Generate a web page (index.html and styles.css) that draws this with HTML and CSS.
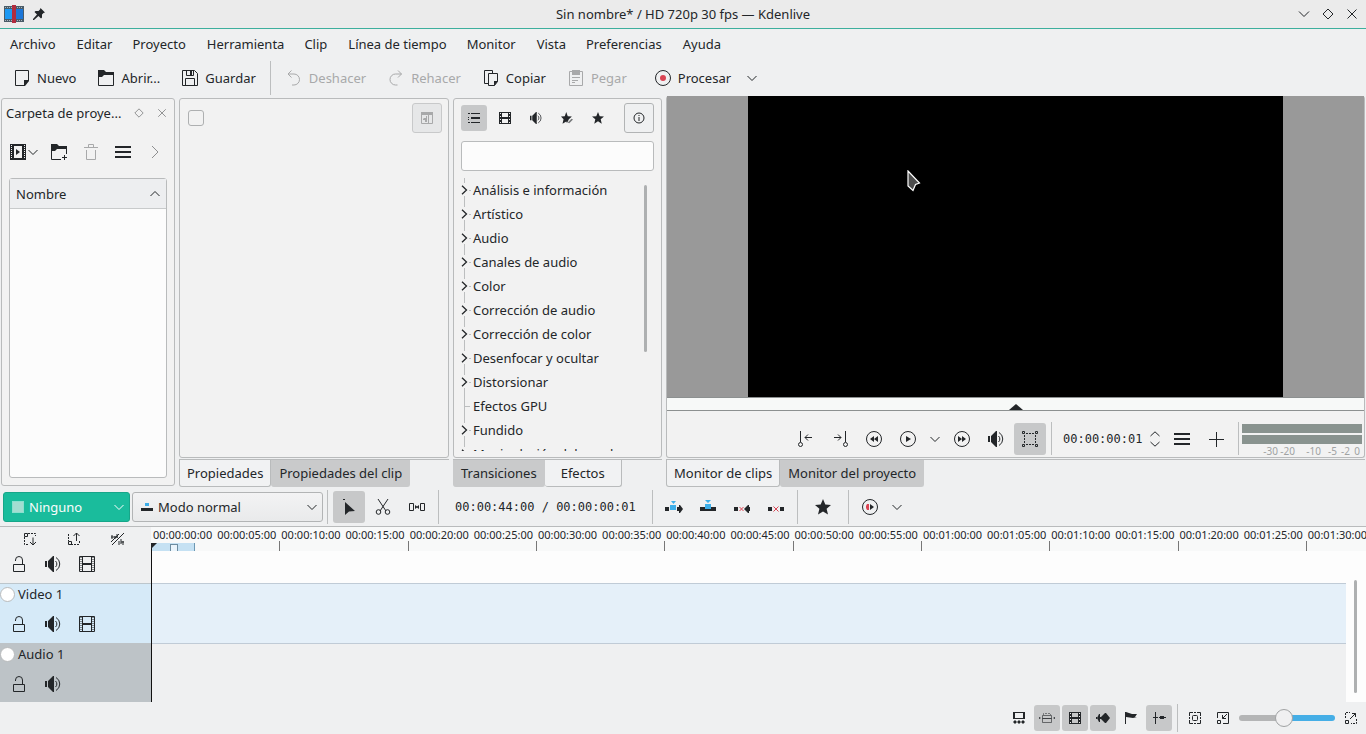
FILE: index.html
```html
<!doctype html>
<html lang="es">
<head>
	<meta charset="UTF-8">
	<title>Sin nombre* / HD 720p 30 fps — Kdenlive</title>
	<link rel="stylesheet" href="styles.css">
</head>
<body>
<svg class="defs" aria-hidden="true">
	<symbol id="down" viewBox="0 0 10 10"><path d="M.5 3 5 7.500 9.500 3" class="l"/></symbol>
	<symbol id="up" viewBox="0 0 10 10"><path d="M.5 7 5 2.500 9.500 7" class="l"/></symbol>
	<symbol id="right" viewBox="0 0 10 14"><path d="M2 1l6 6-6 6" class="l"/></symbol>
	<symbol id="branch" viewBox="0 0 7 10"><path d="M1 .8L5.500 5 1 9.200" class="l bold"/></symbol>
	<symbol id="diamond" viewBox="0 0 12 12"><path d="M6 1l5 5-5 5-5-5z" class="l"/></symbol>
	<symbol id="close" viewBox="0 0 12 12"><path d="M1.500 1.500l9 9m0-9l-9 9" class="l"/></symbol>
	<symbol id="new" viewBox="0 0 16 16"><path d="M1.500.5h13v10l-4.500 5h-8.500z" class="l"/><path d="M10 10h5v1l-4 5h-1z"/></symbol>
	<symbol id="open" viewBox="0 0 16 16"><path d="M0 0h6l2 2h8v3H6L4 7H0z"/><path d="M.5 4v11.500h15V4" class="l"/></symbol>
	<symbol id="save" viewBox="0 0 16 16"><path d="M.5.5h12l3 3v12H.5zM3.500 15.500v-7h9v7M4.500.5v5h7v-5" class="l"/><path d="M8 1h2v4H8z"/></symbol>
	<symbol id="undo" viewBox="0 0 16 16"><path d="M5.500.5L2 4l3.500 3.500M2 4h6a5.500 5.500 0 010 11H6" class="l"/></symbol>
	<symbol id="redo" viewBox="0 0 16 16"><path d="M10 .5L13.500 4 10 7.500M13.500 4h-6a5.500 5.500 0 000 11h2" class="l"/></symbol>
	<symbol id="copy" viewBox="0 0 16 16"><path d="M5.500 13.500h-4V.5h8v3M5.500 3.500h9v8l-3 4h-6z" class="l"/><path d="M11 11h4l-4 5z"/></symbol>
	<symbol id="paste" viewBox="0 0 16 16"><path d="M1.500 1.500h13v14h-13zM4 7.500h8M4 10.500h6M4 12.500h3" class="l"/><path d="M4 0h8v5H4z"/></symbol>
	<symbol id="render" viewBox="0 0 16 16"><circle cx="8" cy="8" r="7.500" class="l"/><circle cx="8" cy="8" r="3" fill="#da4453"/></symbol>
	<symbol id="addclip" viewBox="0 0 16 16"><path d="M0 0h16v16H0zM4 2v12h8V2z" fill-rule="evenodd"/><path d="M1.500 1v14M14.500 1v14" class="holes"/><path d="M6 5l4 3-4 3z"/></symbol>
	<symbol id="addfolder" viewBox="0 0 16 16"><path d="M0 0h6l2 2h8v3H6L4 7H0z"/><path d="M.5 4v11.500H10M15.500 4v6M13.500 11v5M11 13.500h5" class="l"/></symbol>
	<symbol id="trash" viewBox="0 0 16 16"><path d="M1 3.500h14M5.500 3V.5h5V3M3.500 6v9.500h9V6" class="l"/></symbol>
	<symbol id="menu" viewBox="0 0 16 16"><path d="M0 2h16v2H0zM0 7h16v2H0zM0 12h16v2H0z"/></symbol>
	<symbol id="pane" viewBox="0 0 16 16"><path d="M2.500 2.500h11v11h-11zM9.500 5v8" class="l"/><path d="M2 2h12v3H2zM7 6h1v6H6v-2H4V9l1-1h2z"/></symbol>
	<symbol id="list" viewBox="0 0 16 16"><path d="M5 3h9v1H5zM5 7h9v2H5zM5 12h9v1H5zM2 3h2v1H2zM2 7h1v1H2zM2 9h1v1H2zM2 12h2v1H2z"/></symbol>
	<symbol id="film" viewBox="0 0 12 12"><path d="M0 0h12v12H0zM3 1v4h6V1zM3 7v4h6V7z" fill-rule="evenodd"/><path d="M1.500 1v10M10.500 1v10" class="holes wide-dash"/></symbol>
	<symbol id="sound" viewBox="0 0 16 16"><path d="M0 5h2v6H0zM3 5l5-5h1v16H8l-5-5z"/><path d="M10.500 5a4 4 0 010 6M11 1.500a7.500 7.500 0 010 13" class="l"/></symbol>
	<symbol id="star" viewBox="0 0 16 16"><path d="M8 0l2.300 5.500L16 6l-4.400 3.700L13 15.500 8 12.400 3 15.500l1.400-5.800L0 6l5.700-.5z"/></symbol>
	<symbol id="staredit" viewBox="0 0 16 16"><path d="M7 0l2 5.500 5.500.5-4 3.700-2.500 5-1-2-5 2.800 1.400-5.800L0 6l5-.5z"/><path d="M9 14l5-5 2 1-5 5z" opacity=".6"/></symbol>
	<symbol id="info" viewBox="0 0 14 14"><circle cx="7" cy="7" r="5" class="l"/><path d="M6.500 4h1v1h-1zM6.500 6h1v4h-1z"/></symbol>
	<symbol id="zonein" viewBox="0 0 16 16"><path d="M2.500 0v11M14 6.500H7M10 3.500l-3 3 3 3" class="l"/><circle cx="2.500" cy="13.500" r="2" class="l"/></symbol>
	<symbol id="zoneout" viewBox="0 0 16 16"><path d="M13.500 0v11M2 6.500h7M6 3.500l3 3-3 3" class="l"/><circle cx="13.500" cy="13.500" r="2" class="l"/></symbol>
	<symbol id="rewind" viewBox="0 0 16 16"><circle cx="8" cy="8" r="7.500" class="l"/><path d="M8 5v6L4 8zM12 5v6L8 8z"/></symbol>
	<symbol id="play" viewBox="0 0 16 16"><circle cx="8" cy="8" r="7.500" class="l"/><path d="M6 5l5 3-5 3z"/></symbol>
	<symbol id="forward" viewBox="0 0 16 16"><circle cx="8" cy="8" r="7.500" class="l"/><path d="M4 5l4 3-4 3zM8 5l4 3-4 3z"/></symbol>
	<symbol id="frame" viewBox="0 0 16 16"><path d="M.5.5h2v2h-2zM13.500.5h2v2h-2zM.5 13.500h2v2h-2zM13.500 13.500h2v2h-2z" class="l"/><path d="M4 2.500h9M4 13.500h9M2.500 4v9M13.500 4v9" class="dash"/></symbol>
	<symbol id="plus" viewBox="0 0 16 16"><path d="M8.500 1v15M1 8.500h15" class="l"/></symbol>
	<symbol id="spin" viewBox="0 0 10 16"><path d="M.5 5L5 .8 9.500 5M.5 11L5 15.200 9.500 11" class="l"/></symbol>
	<symbol id="normal" viewBox="0 0 12 10"><path d="M4 1h4v3H4z" fill="#3daee9"/><path d="M0 6h12v3H0z"/></symbol>
	<symbol id="arrow" viewBox="0 0 16 16"><path d="M4 3l10 9-6 .5L4 16zM2 0h2v1H2z"/></symbol>
	<symbol id="cut" viewBox="0 0 16 16"><path d="M3 0l8 12M13 0L5 12" class="l"/><circle cx="3.500" cy="13" r="2.300" class="l"/><circle cx="12.500" cy="13" r="2.300" class="l"/></symbol>
	<symbol id="spacer" viewBox="0 0 16 16"><path d="M.5 4.500h4v7h-4zM11.500 4.500h4v7h-4z" class="l"/><path d="M6 6l2 1.500L10 6v4L8 8.500 6 10z"/></symbol>
	<symbol id="insert" viewBox="0 0 18 16"><path d="M0 8h4v4H0zM12 8h2V6h1l3 4-3 4h-1v-2h-2z"/><path d="M5 6h6v5H5zM6 2h5L8.500 5z" fill="#3daee9"/></symbol>
	<symbol id="overwrite" viewBox="0 0 16 16"><path d="M0 8h16v4H0z"/><path d="M5 5h6v5H5zM5 1h6L8 4z" fill="#3daee9"/></symbol>
	<symbol id="extract" viewBox="0 0 16 16"><path d="M0 8h4v4H0zM10 10l4-4h1v2h1v4h-1v2h-1z"/><path d="M5.500 8l4 4m0-4l-4 4" class="l red"/></symbol>
	<symbol id="lift" viewBox="0 0 16 16"><path d="M0 8h4v4H0zM12 8h4v4h-4z"/><path d="M5.500 7.500l5 5m0-5l-5 5" class="l red"/></symbol>
	<symbol id="preview" viewBox="0 0 16 16"><circle cx="8" cy="8" r="7.500" class="l"/><path d="M7 5v6H5L4 9V7l1-2z" fill="#da4453"/><path d="M8 5l4 3-4 3z"/></symbol>
	<symbol id="lock" viewBox="0 0 16 16"><path d="M2.500 8.500h11v7h-11zM11.500 8V4a3.500 3.500 0 00-7 0v1" class="l"/></symbol>
	<symbol id="filmtrack" viewBox="0 0 16 16"><path d="M.5.5h15v15H.5zM3.500 0v16M12.500 0v16M4 7.500h8M4 8.500h8" class="l"/><path d="M2 1v14M14 1v14" class="dots"/></symbol>
	<symbol id="down-tracks" viewBox="0 0 14 14"><path d="M5 1.500h7.500V4M1.500 5v7.500H6" class="dash"/><path d="M1.500 1.500h3v3h-3zM10 5.500V13M7 10l3 3 3-3" class="l"/></symbol>
	<symbol id="up-tracks" viewBox="0 0 14 14"><path d="M1.500 2v7M4 12.500h9M12.500 9v3" class="dash"/><path d="M1.500 9.500h3v3h-3zM9.500 9V1M6.500 4l3-3 3 3" class="l"/></symbol>
	<symbol id="nosplit" viewBox="0 0 14 14"><path d="M1 13L13 1M0 10l8-8M1 3v4M4 4v3M6 2v4M8 9v4M10 7v5M12 9v4M10 10h3M0 5h7" class="l"/></symbol>
	<symbol id="thumbs" viewBox="0 0 14 14"><path d="M1 1h12v7H1zM3 2v5h8V2z" fill-rule="evenodd"/><path d="M1 11l2-2 2 2-2 2zM5 11l2-2 2 2-2 2zM9 11l2-2 2 2-2 2z"/></symbol>
	<symbol id="fit" viewBox="0 0 16 16"><path d="M4.500 5V3.500h7V5" class="dash" opacity=".5"/><path d="M3.500 8.500h9v4h-9zM3.500 5.500h9v3h-9z" class="l" opacity=".6"/><path d="M0 7l2 1-2 1zM16 7l-2 1 2 1z"/></symbol>
	<symbol id="wave" viewBox="0 0 16 16"><path d="M1 7h1v2H1zM2 8l2-4h1v3h1l4-4h1l4 5-4 5h-1L6 9H5v3H4z"/></symbol>
	<symbol id="flag" viewBox="0 0 16 16"><path d="M2 2h1l6 2h5l-2 3h2l-4 1-7-1v7H2z"/></symbol>
	<symbol id="snap" viewBox="0 0 16 16"><path d="M4.500 2v12M2 7.500h5M8 7.500h1" class="l"/><path d="M9 6h4v1h2v1h-2v1H9z"/></symbol>
	<symbol id="zoomfit" viewBox="0 0 14 14"><path d="M1.500 5V1.500H5M9 1.500h3.500V5M12.500 9v3.500H9M5 12.500H1.500V9M6 1.500h2M6 12.500h2M1.500 6v2M12.500 6v2" class="l"/><rect x="4.500" y="4.500" width="5" height="5" rx="1" class="l"/></symbol>
	<symbol id="zoomout" viewBox="0 0 14 14"><path d="M1.500 7V1.500h11v11H7M1.500 9.500h3v3h-3zM11 3L6.500 7.500M6.500 4v3.500H10" class="l"/></symbol>
	<symbol id="zoomin" viewBox="0 0 14 14"><path d="M1.500 7V1.500H6M12.500 8v4.500H7" class="dash"/><path d="M1.500 9.500h3v3h-3zM6 8l5.500-5.500M8 2.500h3.500V6" class="l"/></symbol>
</svg>

<header class="titlebar">
	<div class="title-left">
		<svg class="logo" viewBox="0 0 20 18"><path d="M0 1h20v16H0z" fill="#4a5c68"/><path d="M1 4h8v10H1z" fill="#1d99f3"/><path d="M11 4h8v10h-8z" fill="#1b76d8"/><path d="M1 2.500h18M1 15.500h18" stroke="#aab7bf" stroke-dasharray="1 1"/><path d="M8 0h4v18H8z" fill="#b02c3f"/></svg>
		<svg class="pin" viewBox="0 0 12 12"><path d="M7.500 0L12 4.500 10.500 5 9 6.500v3L8 10.500 5.500 8 1 12H0v-1l4-4.500L1.500 4l1-1h3L7 1.500z"/></svg>
	</div>
	<h1>Sin nombre* / HD 720p 30 fps — Kdenlive</h1>
	<div class="title-right">
		<button aria-label="Minimizar"><svg class="s12" viewBox="0 0 12 12"><path d="M1 3.500l5 5 5-5" class="l"/></svg></button>
		<button aria-label="Maximizar"><svg class="s12"><use href="#diamond"/></svg></button>
		<button aria-label="Cerrar"><svg class="s12"><use href="#close"/></svg></button>
	</div>
</header>

<nav class="menubar">
	<button>Archivo</button>
	<button>Editar</button>
	<button>Proyecto</button>
	<button>Herramienta</button>
	<button>Clip</button>
	<button>Línea de tiempo</button>
	<button>Monitor</button>
	<button>Vista</button>
	<button>Preferencias</button>
	<button>Ayuda</button>
</nav>

<div class="toolbar">
	<button><svg class="s16"><use href="#new"/></svg>Nuevo</button>
	<button><svg class="s16"><use href="#open"/></svg>Abrir...</button>
	<button><svg class="s16"><use href="#save"/></svg>Guardar</button>
	<span class="sep"></span>
	<button disabled><svg class="s16"><use href="#undo"/></svg>Deshacer</button>
	<button disabled><svg class="s16"><use href="#redo"/></svg>Rehacer</button>
	<button><svg class="s16"><use href="#copy"/></svg>Copiar</button>
	<button disabled><svg class="s16"><use href="#paste"/></svg>Pegar</button>
	<button class="process"><svg class="s16"><use href="#render"/></svg>Procesar</button>
	<button class="drop" aria-label="Opciones de procesado"><svg class="s10"><use href="#down"/></svg></button>
</div>

<main class="docks">
	<section class="panel bin">
		<div class="dock-title">
			<h2>Carpeta de proye...</h2>
			<button aria-label="Desacoplar"><svg class="s10"><use href="#diamond"/></svg></button>
			<button aria-label="Cerrar panel"><svg class="s10"><use href="#close"/></svg></button>
		</div>
		<div class="bin-tools">
			<button class="wide" aria-label="Añadir clip"><svg class="s16"><use href="#addclip"/></svg><svg class="s10"><use href="#down"/></svg></button>
			<button aria-label="Crear carpeta"><svg class="s16"><use href="#addfolder"/></svg></button>
			<button aria-label="Borrar" disabled><svg class="s16"><use href="#trash"/></svg></button>
			<button aria-label="Opciones"><svg class="s16"><use href="#menu"/></svg></button>
			<button aria-label="Más" class="more"><svg class="more-icon"><use href="#right"/></svg></button>
		</div>
		<div class="bin-tree">
			<button class="bin-head">Nombre<svg class="s10"><use href="#up"/></svg></button>
		</div>
	</section>

	<section class="dock">
		<div class="panel props">
			<input type="checkbox" aria-label="Activar efectos">
			<button class="framed" aria-label="Mostrar panel" disabled><svg class="s16"><use href="#pane"/></svg></button>
		</div>
		<div class="tabs">
			<button>Propiedades</button>
			<button class="dark">Propiedades del clip</button>
		</div>
	</section>

	<section class="dock">
		<div class="panel effects">
			<div class="effect-tools">
				<button class="on" aria-label="Todos"><svg class="s16"><use href="#list"/></svg></button>
				<button aria-label="Vídeo"><svg class="s12"><use href="#film"/></svg></button>
				<button aria-label="Audio"><svg class="s12"><use href="#sound"/></svg></button>
				<button aria-label="Personalizados"><svg class="s12"><use href="#staredit"/></svg></button>
				<button aria-label="Favoritos"><svg class="s12"><use href="#star"/></svg></button>
				<button class="framed" aria-label="Información"><svg class="s14"><use href="#info"/></svg></button>
			</div>
			<input type="text" class="search" aria-label="Buscar">
			<div class="tree-wrap">
				<ul class="tree">
					<li><svg><use href="#branch"/></svg>Análisis e información</li>
					<li><svg><use href="#branch"/></svg>Artístico</li>
					<li><svg><use href="#branch"/></svg>Audio</li>
					<li><svg><use href="#branch"/></svg>Canales de audio</li>
					<li><svg><use href="#branch"/></svg>Color</li>
					<li><svg><use href="#branch"/></svg>Corrección de audio</li>
					<li><svg><use href="#branch"/></svg>Corrección de color</li>
					<li><svg><use href="#branch"/></svg>Desenfocar y ocultar</li>
					<li><svg><use href="#branch"/></svg>Distorsionar</li>
					<li class="leaf">Efectos GPU</li>
					<li><svg><use href="#branch"/></svg>Fundido</li>
					<li><svg><use href="#branch"/></svg>Manipulación del canal</li>
				</ul>
				<span class="thumb"></span>
			</div>
		</div>
		<div class="tabs">
			<button class="dark">Transiciones</button>
			<button class="roomy">Efectos</button>
		</div>
	</section>

	<section class="dock">
		<div class="panel monitor">
			<div class="stage">
				<div class="screen"></div>
				<svg class="cursor" viewBox="0 0 14 22"><path d="M1 1l11.500 12-4 1.500L6 20.500 1 16z" fill="#4d4d4d" stroke="#fff" stroke-width="1.200"/></svg>
			</div>
			<div class="seek"><span class="marker"></span></div>
			<div class="controls">
				<button aria-label="Inicio de zona"><svg class="s16"><use href="#zonein"/></svg></button>
				<button aria-label="Fin de zona"><svg class="s16"><use href="#zoneout"/></svg></button>
				<button aria-label="Rebobinar"><svg class="s16"><use href="#rewind"/></svg></button>
				<button aria-label="Reproducir"><svg class="s16"><use href="#play"/></svg></button>
				<button class="drop" aria-label="Opciones de reproducción"><svg class="s10"><use href="#down"/></svg></button>
				<button aria-label="Avanzar"><svg class="s16"><use href="#forward"/></svg></button>
				<button aria-label="Volumen"><svg class="s16"><use href="#sound"/></svg></button>
				<button class="on" aria-label="Modo edición"><svg class="s16"><use href="#frame"/></svg></button>
				<span class="sep"></span>
				<input type="text" class="timecode" value="00:00:00:01" aria-label="Posición">
				<button class="spin" aria-label="Cambiar posición"><svg><use href="#spin"/></svg></button>
				<button aria-label="Menú"><svg class="s16"><use href="#menu"/></svg></button>
				<button aria-label="Añadir"><svg class="s16"><use href="#plus"/></svg></button>
				<span class="sep last"></span>
				<div class="meter">
					<i></i>
					<i></i>
					<div class="scale"><span>-30</span><span>-20</span><span>-10</span><span>-5</span><span>-2</span><span>0</span></div>
				</div>
			</div>
		</div>
		<div class="tabs">
			<button>Monitor de clips</button>
			<button class="dark">Monitor del proyecto</button>
		</div>
	</section>
</main>

<div class="edit-bar">
	<div class="combo green">
		<span class="swatch"></span>
		<select aria-label="Transición automática"><option>Ninguno</option></select>
		<svg class="s10"><use href="#down"/></svg>
	</div>
	<div class="combo mode">
		<svg class="mode-icon"><use href="#normal"/></svg>
		<select aria-label="Modo de edición"><option>Modo normal</option></select>
		<svg class="s10"><use href="#down"/></svg>
	</div>
	<span class="sep"></span>
	<button class="on" aria-label="Selección"><svg class="s16"><use href="#arrow"/></svg></button>
	<button aria-label="Cuchilla"><svg class="s16"><use href="#cut"/></svg></button>
	<button aria-label="Espaciador"><svg class="s16"><use href="#spacer"/></svg></button>
	<span class="sep"></span>
	<span class="position">00:00:44:00 / 00:00:00:01</span>
	<span class="sep"></span>
	<button aria-label="Insertar"><svg class="s18"><use href="#insert"/></svg></button>
	<button aria-label="Sobrescribir"><svg class="s16"><use href="#overwrite"/></svg></button>
	<button aria-label="Extraer"><svg class="s16"><use href="#extract"/></svg></button>
	<button aria-label="Levantar"><svg class="s16"><use href="#lift"/></svg></button>
	<span class="sep"></span>
	<button class="fav" aria-label="Favoritos"><svg class="s16"><use href="#star"/></svg></button>
	<span class="sep"></span>
	<button aria-label="Previsualizar"><svg class="s16"><use href="#preview"/></svg></button>
	<button class="drop" aria-label="Opciones de previsualización"><svg class="s10"><use href="#down"/></svg></button>
</div>

<section class="timeline">
	<div class="heads">
		<div class="head-tools">
			<button aria-label="Bajar pistas"><svg class="s14"><use href="#down-tracks"/></svg></button>
			<button aria-label="Subir pistas"><svg class="s14"><use href="#up-tracks"/></svg></button>
			<button aria-label="Separar audio"><svg class="s14"><use href="#nosplit"/></svg></button>
		</div>
		<div class="head first">
			<div class="head-icons">
				<button aria-label="Bloquear"><svg class="s16"><use href="#lock"/></svg></button>
				<button aria-label="Silenciar"><svg class="s16"><use href="#sound"/></svg></button>
				<button aria-label="Ocultar"><svg class="s16"><use href="#filmtrack"/></svg></button>
			</div>
		</div>
		<div class="head video">
			<label><input type="radio" name="target">Video 1</label>
			<div class="head-icons">
				<button aria-label="Bloquear"><svg class="s16"><use href="#lock"/></svg></button>
				<button aria-label="Silenciar"><svg class="s16"><use href="#sound"/></svg></button>
				<button aria-label="Ocultar"><svg class="s16"><use href="#filmtrack"/></svg></button>
			</div>
		</div>
		<div class="head audio">
			<label><input type="radio" name="target">Audio 1</label>
			<div class="head-icons">
				<button aria-label="Bloquear"><svg class="s16"><use href="#lock"/></svg></button>
				<button aria-label="Silenciar"><svg class="s16"><use href="#sound"/></svg></button>
			</div>
		</div>
	</div>
	<div class="area">
		<div class="ruler">
			<ol>
				<li>00:00:00:00</li>
				<li>00:00:05:00</li>
				<li>00:00:10:00</li>
				<li>00:00:15:00</li>
				<li>00:00:20:00</li>
				<li>00:00:25:00</li>
				<li>00:00:30:00</li>
				<li>00:00:35:00</li>
				<li>00:00:40:00</li>
				<li>00:00:45:00</li>
				<li>00:00:50:00</li>
				<li>00:00:55:00</li>
				<li>00:01:00:00</li>
				<li>00:01:05:00</li>
				<li>00:01:10:00</li>
				<li>00:01:15:00</li>
				<li>00:01:20:00</li>
				<li>00:01:25:00</li>
				<li>00:01:30:00</li>
			</ol>
			<span class="zone"></span>
		</div>
		<div class="tracks">
			<div class="lanes">
				<div class="lane first"></div>
				<div class="lane video"></div>
				<div class="lane audio"></div>
			</div>
			<div class="vscroll"><span></span></div>
		</div>
		<div class="playhead"></div>
	</div>
</section>

<footer class="status">
	<button aria-label="Miniaturas"><svg class="s14"><use href="#thumbs"/></svg></button>
	<button class="on" aria-label="Ajustar"><svg class="s16"><use href="#fit"/></svg></button>
	<button class="on" aria-label="Miniaturas de vídeo"><svg class="s12"><use href="#film"/></svg></button>
	<button class="on" aria-label="Miniaturas de audio"><svg class="s16"><use href="#wave"/></svg></button>
	<button aria-label="Marcadores"><svg class="s16"><use href="#flag"/></svg></button>
	<button class="on" aria-label="Ajustar a la rejilla"><svg class="s16"><use href="#snap"/></svg></button>
	<span class="sep"></span>
	<button aria-label="Ajustar al proyecto"><svg class="s14"><use href="#zoomfit"/></svg></button>
	<button aria-label="Reducir"><svg class="s14"><use href="#zoomout"/></svg></button>
	<input type="range" min="0" max="100" value="46" aria-label="Ampliación">
	<button aria-label="Ampliar"><svg class="s14"><use href="#zoomin"/></svg></button>
</footer>
</body>
</html>
```
FILE: styles.css
```css
*{
	margin:0;
	padding:0;
	box-sizing:border-box;
}
body{
	display:flex;
	flex-direction:column;
	height:100vh;
	overflow:hidden;
	background:#eff0f1;
	color:#232629;
	font:13px/18px "Noto Sans",sans-serif;
}
button,input,select{
	font:inherit;
	color:inherit;
	border:0;
	background:none;
}
button{
	display:flex;
	align-items:center;
	justify-content:center;
	flex:none;
	white-space:nowrap;
}
ul,ol{
	list-style:none;
}
h1,h2{
	font-size:13px;
	font-weight:normal;
}

/* icons */
.defs{
	position:absolute;
	width:0;
	height:0;
}
svg{
	display:block;
	flex:none;
	fill:currentColor;
}
.l{
	fill:none;
	stroke:currentColor;
}
.bold{
	stroke-width:1.3;
}
.red{
	stroke:#da4453;
}
.dash{
	fill:none;
	stroke:currentColor;
	stroke-dasharray:2 1;
}
.holes{
	stroke:#f2f2f2;
	stroke-dasharray:1 1;
}
.wide-dash{
	stroke-dasharray:1 2;
}
.dots{
	stroke:currentColor;
	stroke-dasharray:1 1;
}
.s10{
	width:10px;
	height:10px;
}
.s12{
	width:12px;
	height:12px;
}
.s14{
	width:14px;
	height:14px;
}
.s16{
	width:16px;
	height:16px;
}
.s18{
	width:18px;
	height:16px;
}
.sep{
	flex:none;
	align-self:stretch;
	width:1px;
	background:#bcbebf;
}
.on{
	background:#c7c8c9;
	border-radius:3px;
}
button:disabled{
	color:#a8a9aa;
}

/* title bar */
.titlebar{
	display:grid;
	grid-template-columns:1fr auto 1fr;
	align-items:center;
	height:29px;
	border-bottom:1px solid #3daf9d;
	background:#ebebeb;
}
.title-left{
	display:flex;
	align-items:center;
	gap:9px;
	padding-left:4px;
}
.logo{
	width:20px;
	height:18px;
}
.pin{
	width:12px;
	height:12px;
}
.title-right{
	display:flex;
	justify-content:flex-end;
	gap:12px;
	padding-right:8px;
}

/* menu and main toolbar */
.menubar{
	display:flex;
	gap:20px;
	height:31px;
	padding:0 10px 2px;
}
.menubar button:nth-child(odd){
	margin-right:1px;
}
.toolbar{
	display:flex;
	height:36px;
	padding:0 3px;
}
.toolbar button{
	gap:7px;
	padding:0 11px;
}
.toolbar .sep{
	margin:1px 4px 1px 3px;
}
.toolbar .process{
	margin-left:6px;
}
.toolbar .drop{
	padding:0 5px;
}

/* docks */
.docks{
	flex:1;
	min-height:0;
	display:grid;
	grid-template-columns:174px 270px 209px 1fr;
	gap:4px;
	padding:0 1px;
}
.dock{
	display:flex;
	flex-direction:column;
	min-width:0;
	min-height:0;
	padding-top:2px;
}
.panel{
	border:1px solid #b9bbbc;
	border-radius:3px;
	background:#f2f2f2;
}
.dock .panel{
	flex:1;
	min-height:0;
}
.tabs{
	display:flex;
	height:28px;
	margin:1px 0 1px;
	border-top:1px solid #b9bbbc;
}
.tabs button{
	padding:0 7px;
	border:1px solid #b9bbbc;
	border-top:0;
	border-radius:0 0 3px 3px;
	background:#f1f2f3;
}
.tabs .dark{
	border-color:#c9cacb;
	background:#c9cacb;
}
.tabs .roomy{
	padding:0 16px;
	border-left:0;
}

.bin{
	display:flex;
	flex-direction:column;
	margin:2px 0;
}
.dock-title{
	display:flex;
	align-items:center;
	height:27px;
	padding:0 9px 0 4px;
	gap:13px;
}
.dock-title h2{
	flex:1;
	white-space:nowrap;
}
.dock-title button{
	color:#7f8182;
}
.bin-tools{
	display:flex;
	height:52px;
	padding-left:1px;
}
.bin-tools button{
	width:32px;
}
.bin-tools .wide{
	width:40px;
	padding-left:1px;
	gap:2px;
}
.bin-tools .more{
	color:#8e8f90;
}
.more-icon{
	width:10px;
	height:14px;
}
.bin-tree{
	flex:1;
	margin:0 7px;
	margin-bottom:7px;
	border:1px solid #b9bbbc;
	border-radius:3px;
	background:#fcfcfc;
}
.bin-head{
	width:100%;
	height:30px;
	padding:0 6px;
	justify-content:space-between;
	border-bottom:1px solid #c8cacb;
	background:#edeef0;
}

.props{
	display:flex;
	justify-content:space-between;
	align-items:flex-start;
	padding:4px 6px 0 8px;
}
.props input{
	appearance:none;
	width:16px;
	height:16px;
	margin-top:7px;
	border:1px solid #aeb0b1;
	border-radius:3px;
}
.framed{
	width:30px;
	height:30px;
	border:1px solid #b2b4b5;
	border-radius:3px;
	background:#eff0f1;
}
.framed:disabled{
	border-color:#c8c9ca;
	background:#e6e7e8;
}

.effects{
	display:flex;
	flex-direction:column;
	padding:4px 7px 6px;
}
.effect-tools{
	display:flex;
	align-items:center;
	gap:5px;
}
.effect-tools button{
	width:26px;
	height:26px;
}
.effect-tools .framed{
	width:30px;
	height:30px;
	margin-left:auto;
}
.search{
	height:30px;
	margin:8px 0 7px;
	padding:0 6px;
	border:1px solid #b9bbbc;
	border-radius:3px;
	background:#fcfcfc;
}
.tree-wrap{
	flex:1;
	min-height:0;
	display:flex;
	justify-content:space-between;
	overflow:hidden;
}
.tree li{
	display:flex;
	align-items:center;
	height:24px;
	padding-left:12px;
	white-space:nowrap;
	background:linear-gradient(#bcbebf,#bcbebf) 3px 0/1px 5px no-repeat,linear-gradient(#bcbebf,#bcbebf) 3px 18px/1px 6px no-repeat,linear-gradient(#bcbebf,#bcbebf) 8px 12px/2px 1px no-repeat;
}
.tree .leaf{
	background:linear-gradient(#bcbebf,#bcbebf) 3px 0/1px 24px no-repeat,linear-gradient(#bcbebf,#bcbebf) 4px 12px/5px 1px no-repeat;
}
.tree svg{
	width:7px;
	height:10px;
	margin:0 5px 0 -12px;
}
.thumb{
	width:3px;
	height:167px;
	margin:7px 7px 0 0;
	border-radius:2px;
	background:#aeb0b1;
}

/* monitor */
.monitor{
	display:flex;
	flex-direction:column;
	margin-top:-2px;
	border-top:0;
}
.stage{
	position:relative;
	flex:1;
	min-height:0;
	display:flex;
	justify-content:center;
	background:#999;
}
.screen{
	height:100%;
	aspect-ratio:16/9;
	background:#000;
}
.cursor{
	position:absolute;
	left:240px;
	top:74px;
	width:14px;
	height:22px;
}
.seek{
	display:flex;
	justify-content:center;
	align-items:flex-end;
	height:14px;
	border-top:1px solid #8c9090;
	border-bottom:1px solid #8c9090;
	background:#f7f9f8;
}
.marker{
	border:7px solid transparent;
	border-top:0;
	border-bottom:6px solid #232629;
}
.controls{
	display:flex;
	justify-content:flex-end;
	align-items:center;
	height:46px;
	padding:9px 2px 0 0;
}
.controls button{
	width:34px;
	height:32px;
}
.controls .drop{
	width:20px;
}
.controls .on{
	width:32px;
	margin:0 5px 0 1px;
}
.controls .sep{
	margin:2px 0;
}
.controls .last{
	margin-left:5px;
}
.timecode,.position{
	font:12px/18px "DejaVu Sans Mono",monospace;
}
.timecode{
	width:82px;
	margin-left:11px;
}
.controls .spin{
	width:20px;
}
.spin svg{
	width:10px;
	height:16px;
}
.meter{
	width:120px;
	margin-left:3px;
	padding-top:2px;
}
.meter i{
	display:block;
	height:9px;
	margin-bottom:2px;
	background:#89938f;
}
.scale{
	display:grid;
	grid-template-columns:36px 17px 26px 16px 13px 10px;
	font-size:10px;
	line-height:10px;
	color:#a0a2a3;
	text-align:right;
}

/* timeline toolbar */
.edit-bar{
	display:flex;
	align-items:center;
	height:38px;
	padding-left:3px;
}
.edit-bar button{
	width:34px;
	height:32px;
}
.edit-bar .on{
	width:32px;
	margin:0 1px;
}
.edit-bar .sep{
	margin:2px 4px;
}
.edit-bar .drop{
	width:20px;
}
.edit-bar .fav{
	width:42px;
}
.combo{
	display:flex;
	align-items:center;
	height:30px;
	padding:0 5px 0 8px;
	gap:5px;
	border:1px solid #b2b4b5;
	border-radius:3px;
	background:linear-gradient(#f3f3f4,#e9eaeb);
}
.combo select{
	flex:1;
	appearance:none;
}
.green{
	width:127px;
	border-color:#17a689;
	background:#1abc9c;
	color:#fcfcfc;
}
.mode{
	width:191px;
	margin-left:2px;
}
.swatch{
	width:12px;
	height:12px;
	border:1px solid #8ae0cf;
	background:#a3ddd1;
}
.mode-icon{
	width:12px;
	height:10px;
}
.position{
	padding:0 12px;
	white-space:pre;
}

/* timeline */
.timeline{
	display:flex;
	height:176px;
	border-top:1px solid #b9bbbc;
}
.heads{
	width:151px;
	flex:none;
}
.head-tools{
	display:flex;
	height:24px;
	padding-left:8px;
}
.head-tools button{
	width:44px;
}
.head{
	height:60px;
}
.head label{
	display:flex;
	align-items:center;
	gap:3px;
	height:22px;
}
.head input{
	appearance:none;
	width:15px;
	height:15px;
	border:1px solid #b9bbbc;
	border-radius:50%;
	background:#fff;
}
.heads .first{
	height:32px;
}
.heads .video{
	box-shadow:inset 0 1px #bcc6cc;
	background:#d6eaf8;
}
.heads .audio{
	height:59px;
	background:#bdc3c7;
}
.head-icons{
	display:flex;
	height:38px;
	padding-left:2px;
}
.first .head-icons{
	height:26px;
}
.head-icons button{
	width:34px;
}
.area{
	position:relative;
	flex:1;
	min-width:0;
	display:flex;
	flex-direction:column;
}
.ruler{
	position:relative;
	height:24px;
	overflow:hidden;
	background:#f8f9f9;
}
.ruler ol{
	display:grid;
	grid-template-columns:repeat(19,1fr);
	width:1219px;
}
.ruler li{
	height:24px;
	padding-left:2px;
	font-size:11px;
	line-height:16px;
}
.ruler li:nth-child(odd):not(:first-child){
	background:linear-gradient(#777,#777) 0 14px/1px 10px no-repeat;
}
.zone{
	position:absolute;
	left:1px;
	bottom:0;
	width:43px;
	height:8px;
	border-right:1px solid #6d98b3;
	background:#c5e1f3;
}
.zone::after{
	content:"";
	position:absolute;
	left:18px;
	top:1px;
	width:6px;
	height:6px;
	border:1px solid #6d8ca0;
	background:#eaf4fb;
}
.tracks{
	flex:1;
	display:flex;
}
.lanes{
	flex:1;
}
.lane{
	height:60px;
}
.lanes .first{
	height:32px;
	background:#fdfdfd;
}
.lanes .video{
	height:61px;
	border-top:1px solid #c0cbd6;
	border-bottom:1px solid #c0cbd6;
	background:#e5f0f9;
}
.lanes .audio{
	height:58px;
}
.vscroll{
	width:20px;
	padding:29px 9px 0 8px;
	background:#fdfdfd;
}
.vscroll span{
	display:block;
	height:113px;
	border-radius:2px;
	background:#aeb0b1;
}
.playhead{
	position:absolute;
	left:0;
	top:16px;
	bottom:0;
	width:1px;
	background:#111;
}
.playhead::before{
	content:"";
	position:absolute;
	border:3px solid transparent;
	border-top-color:#232629;
	border-left-color:#232629;
}

/* status bar */
.status{
	display:flex;
	align-items:center;
	justify-content:flex-end;
	gap:2px;
	height:32px;
	padding-right:2px;
}
.status button{
	width:26px;
	height:26px;
}
.on .holes{
	stroke:#c7c8c9;
}
.status .sep{
	margin:2px 2px 2px 3px;
}
.status input{
	appearance:none;
	width:96px;
	height:18px;
	margin:0 1px;
}
.status input::-webkit-slider-runnable-track{
	height:6px;
	border-radius:3px;
	background:linear-gradient(to right,#b4b5b6 46%,#45aee6 46%);
}
.status input::-webkit-slider-thumb{
	appearance:none;
	width:18px;
	height:18px;
	margin-top:-6px;
	border:1px solid #a0a2a3;
	border-radius:50%;
	background:#f0f0f1;
}
```
